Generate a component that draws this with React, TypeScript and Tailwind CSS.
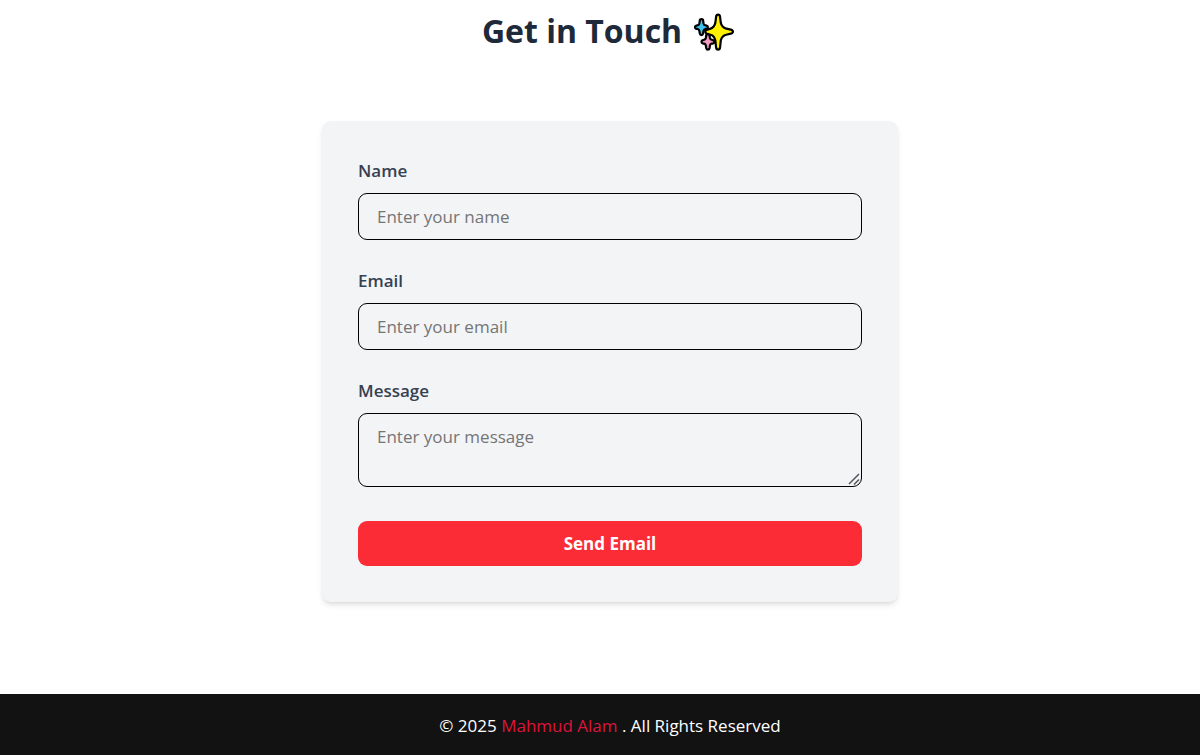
import React from "react";

function Sparkles() {
  return (
    <svg
      role="img"
      aria-label="Sparkles"
      className="mt-0.5 mr-1 h-[38px] w-10 shrink-0"
      viewBox="27 24 118 112"
      stroke="#000"
      strokeWidth="6.5"
      strokeLinejoin="round"
    >
      <path
        fill="#3fc3ee"
        d="M49 42Q54 42 54 47L55 54Q56 59 60 60L64 61Q68 62 68 66T64 71L60 71Q56 72 55 77L54 84Q53 89 49 89T44 84L43 77Q42 72 38 71L34 71Q30 70 30 66T34 61L38 60Q42 59 43 54L44 47Q44 42 49 42Z"
      />
      <path
        fill="#f29ac0"
        d="M68 86Q73 86 73 91L74 97Q75 102 79 103L83 104Q87 105 87 109T83 114L79 114Q75 115 74 120L73 127Q72 132 68 132T63 127L62 120Q61 115 57 114L53 114Q49 113 49 109T53 104L57 103Q61 102 62 97L63 91Q63 86 68 86Z"
      />
      <path
        fill="#fff100"
        d="M98 29Q103 29 104 36L106 53Q109 67 122 70L136 73Q142 75 142 79T136 85L122 88Q109 91 106 105L104 125Q103 132 98 132T92 125L90 105Q87 91 76 88L66 85Q60 83 60 79T66 73L76 70Q87 67 90 53L92 36Q93 29 98 29Z"
      />
    </svg>
  );
}

const fieldClass =
  "block w-full rounded-[9px] border border-black bg-transparent px-[18px] py-[9px] leading-[27px] text-gray-800 placeholder:text-[#757575] focus:outline-none focus:ring-2 focus:ring-red-500";

function Field({
  id,
  label,
  children,
}: {
  id: string;
  label: string;
  children: React.ReactNode;
}) {
  return (
    <div>
      <label htmlFor={id} className="mb-[9px] block font-semibold text-gray-700">
        {label}
      </label>
      {children}
    </div>
  );
}

export default function App() {
  return (
    <div className="flex min-h-screen flex-col bg-white font-['Open_Sans','Noto_Sans',sans-serif] text-[17px] leading-[27px]">
      <main className="flex grow flex-col items-center pb-[92px] pl-5">
        <h1 className="flex items-center gap-3 pt-[11px] text-[32px] leading-10 font-bold text-gray-800">
          Get in Touch
          <Sparkles />
        </h1>
        <form
          className="mt-[70px] flex w-full max-w-xl flex-col gap-[27px] rounded-[9px] bg-gray-100 p-9 shadow-md"
          onSubmit={(e) => e.preventDefault()}
        >
          <Field id="name" label="Name">
            <input id="name" type="text" placeholder="Enter your name" className={fieldClass} />
          </Field>
          <Field id="email" label="Email">
            <input id="email" type="email" placeholder="Enter your email" className={fieldClass} />
          </Field>
          <Field id="message" label="Message">
            <div className="relative">
              <textarea
                id="message"
                rows={2}
                placeholder="Enter your message"
                className={`${fieldClass} resize-y [&::-webkit-resizer]:bg-transparent`}
              />
              <svg
                aria-hidden="true"
                className="pointer-events-none absolute right-0.5 bottom-0.5 size-3"
                viewBox="0 0 12 12"
                fill="none"
                stroke="#55565a"
                strokeWidth="1.5"
              >
                <path d="M1 11L11 1M6 11.5L11 6.5" />
              </svg>
            </div>
          </Field>
          <button
            type="submit"
            className="mt-[7px] w-full rounded-[9px] bg-red-500 py-[9px] font-bold text-white"
          >
            Send Email
          </button>
        </form>
      </main>
      <footer className="bg-[#121212] pt-[18px] pb-4 pl-5 text-center text-white">
        © 2025{" "}
        <a href="#" className="text-[#dc143c]">
          Mahmud Alam
        </a>{" "}
        . All Rights Reserved
      </footer>
    </div>
  );
}
